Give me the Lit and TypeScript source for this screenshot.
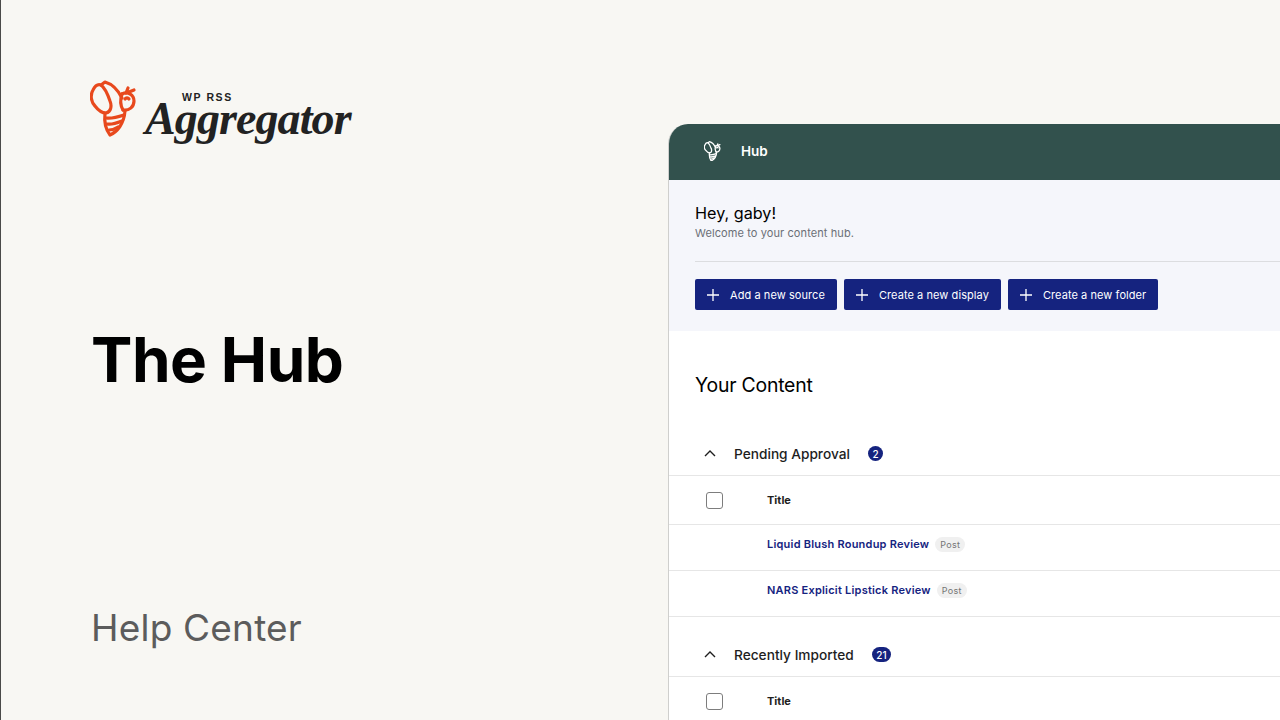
import { LitElement, html, css, svg } from 'lit';
import { customElement } from 'lit/decorators.js';

// bee mark, shared by the big logo and the small header icon
const bee = (width: number, color: string, sw: number) => html`
  <svg width=${width} height=${(width * 58) / 47} viewBox="5 5 47 58" fill="none" stroke=${color} stroke-width=${sw} stroke-linecap="round" stroke-linejoin="round">
    ${svg`
      <path d="M8 15 C5 20 6 27 10 31 C13 35 17 38 21 38 C26 37 27 31 25 26 C23 20 20 13 16 10 C13 9 10 11 8 15 Z" />
      <path d="M16 10 L20 7 C27 9 33 15 37 23" />
      <path d="M37 19 C43 16 49 20 49 26 C49 32 44 36 38 35" />
      <path d="M37 19 C35 25 35 30 38 35" />
      <path d="M41 18 L43 13 M44 17 L49 15" />
      <path d="M40 24 C41 22.5 43 22.5 44 24" />
      <path d="M20 38 C19 47 21 55 25 60 C32 57 39 49 40 36" />
      <path d="M21 43 C27 44 33 42 39 40 M22 49 C27 50 32 48 37 46 M24 55 C27 55 30 54 33 52" />
    `}
  </svg>
`;

const plus = html`
  <svg class="plus" width="12" height="12" viewBox="0 0 12 12" stroke="#fff" stroke-width="1.3" fill="none">
    <path d="M6 0V12M0 6H12" />
  </svg>
`;

const chevron = html`
  <svg class="chev" width="12" height="7" viewBox="0 0 12 7" stroke="#1e1e1e" stroke-width="1.4" fill="none">
    <path d="M1 6L6 1L11 6" />
  </svg>
`;

@customElement('app-root')
export class AppRoot extends LitElement {
  static styles = css`
    :host {
      display: block;
      width: 1280px;
      height: 720px;
      overflow: hidden;
      background: #f8f7f3;
      font-family: Inter, 'Liberation Sans', sans-serif;
      color: #000;
    }

    .page {
      display: flex;
      height: 720px;
      box-sizing: border-box;
      border-left: 1px solid #4a4a48;
    }

    .intro {
      width: 667px;
      flex: none;
      display: flex;
      flex-direction: column;
      box-sizing: border-box;
      padding: 80px 0 0 89px;
    }

    .logo {
      display: flex;
      align-items: flex-start;
      height: 63px;
    }

    .wordmark {
      display: flex;
      flex-direction: column;
      margin-left: 8px;
      color: #222;
    }

    .wp {
      font-family: 'Liberation Sans', sans-serif;
      font-size: 10.5px;
      font-weight: 700;
      letter-spacing: 1.6px;
      line-height: 11px;
      margin: 12px 0 0 37px;
    }

    .script {
      font-family: 'Liberation Serif', serif;
      font-style: italic;
      font-weight: 700;
      font-size: 46px;
      line-height: 40px;
      letter-spacing: -0.9px;
      margin-top: -4px;
    }

    h1 {
      margin: 180px 0 0 1px;
      font-size: 62px;
      line-height: 74px;
      font-weight: 700;
      letter-spacing: -0.45px;
    }

    .sub {
      margin: 209px 0 0 1px;
      font-size: 37px;
      line-height: 44px;
      font-weight: 400;
      color: #5c5c5c;
      letter-spacing: 0.2px;
    }

    .panel {
      flex: 1;
      margin-top: 124px;
      min-width: 0;
      background: #fff;
      border-left: 1px solid #cfcfcd;
      border-top-left-radius: 20px;
      overflow: hidden;
    }

    .bar {
      height: 56px;
      box-sizing: border-box;
      background: #32514d;
      display: flex;
      align-items: center;
      padding: 0 0 2px 35px;
      gap: 20px;
      color: #fff;
      font-size: 13.5px;
      font-weight: 600;
    }

    .hero {
      height: 151px;
      box-sizing: border-box;
      background: #f5f6fb;
      padding: 22px 0 0 26px;
    }

    .hey {
      font-size: 16.2px;
      line-height: 22px;
    }

    .welcome {
      font-size: 11px;
      line-height: 16px;
      color: #6b6f76;
      margin-top: 1px;
      letter-spacing: 0.1px;
    }

    .rule {
      height: 1px;
      background: #dcdde0;
      margin-top: 20px;
    }

    .actions {
      display: flex;
      gap: 7px;
      margin-top: 17px;
    }

    .btn {
      height: 31px;
      box-sizing: border-box;
      background: #15237f;
      color: #fff;
      border-radius: 2px;
      display: flex;
      align-items: center;
      font-size: 11px;
      font-weight: 400;
      padding: 0 12px;
      letter-spacing: 0.07px;
    }

    .plus {
      margin-right: 11px;
    }

    .content-title {
      margin: 40px 0 0 26px;
      font-size: 19.4px;
      line-height: 28px;
      font-weight: 400;
      letter-spacing: -0.2px;
    }

    .sec-head {
      height: 42px;
      box-sizing: border-box;
      display: flex;
      align-items: center;
      padding: 0 0 2px 35px;
      border-bottom: 1px solid #e6e6e6;
      font-size: 13.7px;
      font-weight: 500;
      color: #1e1e1e;
    }

    .chev {
      margin-right: 18px;
    }

    .count {
      margin-left: 18px;
      min-width: 15px;
      height: 15px;
      box-sizing: border-box;
      padding: 0 4.5px;
      border-radius: 8px;
      background: #15237f;
      color: #fff;
      font-size: 10px;
      font-weight: 500;
      display: flex;
      align-items: center;
      justify-content: center;
    }

    .head-row {
      height: 49px;
      box-sizing: border-box;
      display: flex;
      align-items: center;
      border-bottom: 1px solid #e6e6e6;
      padding-left: 37px;
      font-size: 11px;
      font-weight: 700;
      color: #1e1e1e;
    }

    .check {
      width: 17px;
      height: 17px;
      box-sizing: border-box;
      border: 1px solid #7d7d7d;
      border-radius: 3px;
      background: #fff;
      margin-right: 44px;
    }

    .row {
      height: 46px;
      box-sizing: border-box;
      display: flex;
      align-items: flex-start;
      border-bottom: 1px solid #e6e6e6;
      padding: 11px 0 0 98px;
      font-size: 11px;
      font-weight: 600;
      line-height: 16px;
      color: #15237f;
      letter-spacing: 0.22px;
    }

    .tag {
      margin-left: 6px;
      margin-top: 1px;
      padding: 0 5px;
      height: 15px;
      border-radius: 8px;
      background: #f0f0f0;
      color: #757575;
      font-size: 9px;
      font-weight: 400;
      line-height: 15px;
      letter-spacing: 0.3px;
    }

    .sec-1 {
      margin-top: 35px;
    }

    .sec-2 {
      margin-top: 18px;
    }
  `;

  sections = [
    {
      name: 'Pending Approval',
      count: 2,
      cls: 'sec-1',
      rows: ['Liquid Blush Roundup Review', 'NARS Explicit Lipstick Review'],
    },
    { name: 'Recently Imported', count: 21, cls: 'sec-2', rows: [] as string[] },
  ];

  render() {
    return html`
      <div class="page">
        <div class="intro">
          <div class="logo">
            ${bee(47, '#e8491d', 3.2)}
            <div class="wordmark">
              <span class="wp">WP RSS</span>
              <span class="script">Aggregator</span>
            </div>
          </div>
          <h1>The Hub</h1>
          <div class="sub">Help Center</div>
        </div>
        <div class="panel">
          <div class="bar">${bee(17, '#fff', 3.6)}<span>Hub</span></div>
          <div class="hero">
            <div class="hey">Hey, gaby!</div>
            <div class="welcome">Welcome to your content hub.</div>
            <div class="rule"></div>
            <div class="actions">
              ${['Add a new source', 'Create a new display', 'Create a new folder'].map(
                (label) => html`<div class="btn">${plus}${label}</div>`
              )}
            </div>
          </div>
          <div class="content-title">Your Content</div>
          ${this.sections.map(
            (s) => html`
              <div class="section ${s.cls}">
                <div class="sec-head">
                  ${chevron}${s.name}<span class="count">${s.count}</span>
                </div>
                <div class="head-row"><span class="check"></span>Title</div>
                ${s.rows.map(
                  (r) => html`<div class="row">${r}<span class="tag">Post</span></div>`
                )}
              </div>
            `
          )}
        </div>
      </div>
    `;
  }
}
